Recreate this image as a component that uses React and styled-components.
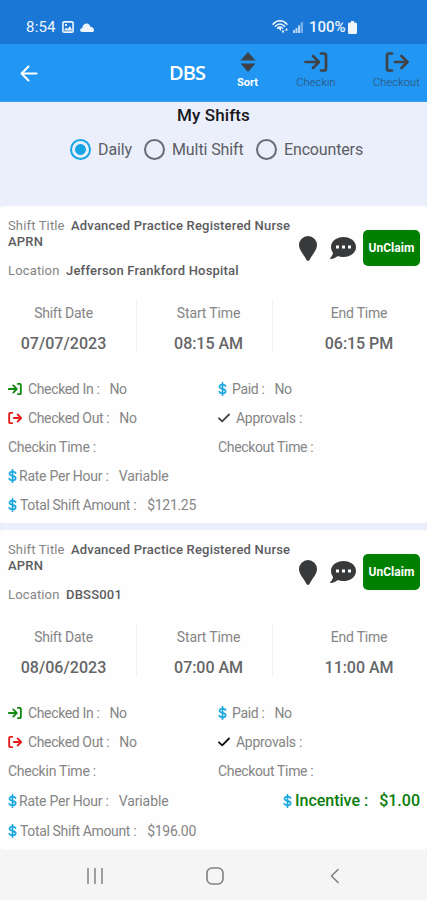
import React from "react";
import styled, { createGlobalStyle } from "styled-components";

const GlobalStyle = createGlobalStyle`
  * { box-sizing: border-box; }
  body { margin: 0; background: #fff; font-family: Roboto, "Liberation Sans", sans-serif; }
`;

const Screen = styled.div`
  width: 427px;
  height: 900px;
  display: flex;
  flex-direction: column;
  overflow: hidden;
  background: #ebeffb;
`;

const StatusBar = styled.header`
  height: 44px;
  flex: none;
  display: flex;
  align-items: center;
  padding: 10px 69px 0 26px;
  background: #1a77d6;
  color: #eef5fd;
  font-size: 15px;
`;

const Clock = styled.span`
  width: 36px;
  letter-spacing: 0.2px;
`;

const Battery = styled.span`
  margin-left: 5px;
  width: 38px;
  font-weight: 500;
  letter-spacing: 0;
`;

const Glyph = styled.svg`
  display: block;
  flex: none;
  width: ${(p) => p.$w}px;
  height: ${(p) => p.$h}px;
  margin-left: ${(p) => p.$left || 0}px;
  color: ${(p) => p.$color || "inherit"};
`;

const AppBar = styled.nav`
  height: 58px;
  flex: none;
  display: grid;
  grid-template-columns: 147px 80px 41px 96px 65px;
  background: #2196f3;
  border-bottom: 1px solid #3aa0f4;
`;

const Back = styled.div`
  padding: 21px 0 0 20px;
  color: #fff;
`;

const Brand = styled.div`
  padding-top: 17px;
  text-align: center;
  font: 600 20px/24px "Open Sans", sans-serif;
  letter-spacing: -1px;
  color: #fff;
`;

const Action = styled.div`
  display: flex;
  flex-direction: column;
  align-items: center;
  padding-top: 8px;
  color: #3f4347;
`;

const ActionLabel = styled.span`
  margin-top: 4px;
  font-size: 11px;
  line-height: 13px;
  font-weight: ${(p) => (p.$active ? 700 : 300)};
  letter-spacing: ${(p) => (p.$active ? 0 : 0.15)}px;
  color: ${(p) => (p.$active ? "#fff" : "#2f4a63")};
`;

const Filters = styled.section`
  height: 104px;
  flex: none;
`;

const Heading = styled.h1`
  margin: 0;
  padding-top: 3px;
  font-size: 17px;
  line-height: 20px;
  font-weight: 500;
  letter-spacing: 0.1px;
  text-align: center;
  color: #17181c;
`;

const Radios = styled.div`
  display: flex;
  align-items: center;
  height: 22px;
  margin-top: 13px;
  padding-left: 70px;
`;

const Option = styled.label`
  display: flex;
  align-items: center;
  width: ${(p) => p.$w}px;
  font-size: 16px;
  letter-spacing: ${(p) => p.$ls}px;
  color: #5b5d64;
  white-space: nowrap;
`;

const Ring = styled.span`
  width: 21px;
  height: 21px;
  flex: none;
  margin-right: 7px;
  border-radius: 50%;
  border: 2px solid ${(p) => (p.$on ? "#17a5e6" : "#6a6c75")};
  background: ${(p) => (p.$on ? "radial-gradient(circle, #17a5e6 5px, transparent 5.8px)" : "transparent")};
`;

const Card = styled.article`
  height: ${(p) => p.$h}px;
  flex: none;
  margin-bottom: ${(p) => p.$gap}px;
  background: #fefefe;
  border-radius: 3px;
  font-size: 14px;
  color: #858585;
`;

const Top = styled.div`
  display: flex;
  height: 84px;
  padding: 12px 7px 0 8px;
`;

const Summary = styled.div`
  width: 291px;
  flex: none;
  font-size: 13px;
  line-height: 16px;
`;

const Line = styled.div`
  white-space: nowrap;
  margin-top: ${(p) => p.$gap || 0}px;
`;

const Caption = styled.span`
  display: inline-block;
  width: ${(p) => p.$w}px;
  letter-spacing: 0.15px;
`;

const Strong = styled.span`
  font-weight: 500;
  letter-spacing: 0.2px;
  color: #5c5c5e;
`;

const Tools = styled.div`
  display: flex;
  align-items: center;
  height: 36px;
  margin-top: 12px;
`;

const Claim = styled.button`
  width: 57px;
  height: 36px;
  margin-left: 7px;
  padding: 0;
  border: 0;
  border-radius: 5px;
  background: #008000;
  color: #fff;
  font: 700 12px/36px Roboto, sans-serif;
  letter-spacing: 0.05px;
`;

const Times = styled.div`
  display: grid;
  grid-template-columns: 137px 136px 154px;
  height: 72px;
  padding-top: 10px;
`;

const TimeCell = styled.div`
  display: flex;
  flex-direction: column;
  align-items: center;
  height: 52px;
  padding: 4px ${(p) => p.$right || 0}px 0 ${(p) => p.$left || 0}px;
  border-right: ${(p) => (p.$last ? "0" : "1px solid #f1f3fa")};
  line-height: 18px;
`;

const TimeLabel = styled.span`
  letter-spacing: ${(p) => p.$ls || 0}px;
`;

const TimeValue = styled.span`
  margin-top: 13px;
  font-size: 16px;
  font-weight: 500;
  letter-spacing: ${(p) => p.$ls}px;
  color: #666668;
`;

const Details = styled.div`
  padding: 12px 7px 0 8px;
`;

const DetailRow = styled.div`
  display: grid;
  grid-template-columns: 210px 1fr;
  height: ${(p) => p.$h}px;
`;

const Detail = styled.div`
  display: flex;
  align-items: center;
  height: 29px;
  justify-content: ${(p) => (p.$end ? "flex-end" : "flex-start")};
  white-space: nowrap;
`;

const Field = styled.span`
  margin-left: ${(p) => p.$left || 0}px;
  letter-spacing: ${(p) => p.$ls || 0}px;
`;

const Incentive = styled.span`
  margin-left: 3px;
  font-size: 16px;
  font-weight: 500;
  color: #0a7d0a;
  white-space: pre;
`;

const SystemNav = styled.footer`
  height: 50px;
  flex: none;
  display: grid;
  grid-template-columns: 95px 120px 120px;
  align-items: center;
  padding: 2px 0 0 35px;
  justify-items: center;
  background: #f5f5f5;
  color: #808183;
`;

const stroke = { fill: "none", stroke: "currentColor", strokeLinecap: "round", strokeLinejoin: "round" };

const EnterIcon = (p) => (
  <Glyph {...p} viewBox="0 0 24 20" preserveAspectRatio="none">
    <path {...stroke} strokeWidth={p.$sw || 2.7} d="M1.500 10H14M9 4l6 6-6 6M17 1.500h3a2 2 0 0 1 2 2v13a2 2 0 0 1-2 2h-3" />
  </Glyph>
);

const ExitIcon = (p) => (
  <Glyph {...p} viewBox="0 0 24 20" preserveAspectRatio="none">
    <path {...stroke} strokeWidth={p.$sw || 2.7} d="M7 1.500H4a2 2 0 0 0-2 2v13a2 2 0 0 0 2 2h3M10 10h12M16.500 4l6 6-6 6" />
  </Glyph>
);

const Dollar = () => (
  <Glyph $w={9} $h={14} $color="#1ba7df" viewBox="0 0 9 14">
    <path {...stroke} strokeWidth="1.700" d="M4.500.8v12.400M7.600 4C7 2.900 6 2.600 4.500 2.600 2.700 2.600 1.500 3.400 1.500 4.700c0 3 6.200 1.500 6.200 4.500 0 1.400-1.300 2.200-3.200 2.200-1.600 0-2.800-.6-3.300-1.700" />
  </Glyph>
);

const Check = ({ color }) => (
  <Glyph $w={12} $h={10} $color={color} viewBox="0 0 12 10">
    <path {...stroke} strokeWidth="1.800" d="M1 5.300 4.200 8.300 11 1.500" />
  </Glyph>
);

const Pin = () => (
  <Glyph $w={18} $h={25} $color="#37393b" viewBox="0 0 18 25">
    <path fill="currentColor" d="M9 0a9 9 0 0 1 9 9c0 5-4 8.400-7.600 15.100q-1.400 1.700-2.800 0C4 17.400 0 14 0 9a9 9 0 0 1 9-9z" />
  </Glyph>
);

const Bubble = () => (
  <Glyph $w={26} $h={22} $left={13} $color="#37393b" viewBox="0 0 26 22">
    <path fill="currentColor" d="M13.500 0C20.400 0 26 4.300 26 9.900s-5.600 10.100-12.500 10.100c-2 0-4-.4-5.600-1C6 20.600 3.600 21.800.5 22q-.8-.2-.2-.9C1.700 19.500 2.800 17.800 3 15.900A8.700 8.700 0 0 1 1 9.900C1 4.300 6.600 0 13.500 0z" />
    <path fill="#fff" d="M6 8.500h3v3H6zM12 8.500h3v3h-3zM18 8.500h3v3h-3z" />
  </Glyph>
);

const shifts = [
  { location: "Jefferson Frankford Hospital", date: "07/07/2023", start: "08:15 AM", end: "06:15 PM", total: "$121.25", height: 317, gap: 7, check: "#444", last: 29 },
  { location: "DBSS001", date: "08/06/2023", start: "07:00 AM", end: "11:00 AM", total: "$196.00", height: 320, gap: 0, check: "#111", last: 30, incentive: "$1.00" },
];

function ShiftCard({ s }) {
  return (
    <Card $h={s.height} $gap={s.gap}>
      <Top>
        <Summary>
          <Line><Caption $w={63}>Shift Title</Caption><Strong>Advanced Practice Registered Nurse</Strong></Line>
          <Line><Strong>APRN</Strong></Line>
          <Line $gap={13}><Caption $w={58}>Location</Caption><Strong>{s.location}</Strong></Line>
        </Summary>
        <Tools><Pin /><Bubble /><Claim>UnClaim</Claim></Tools>
      </Top>
      <Times>
        <TimeCell $right={9}><TimeLabel $ls={-0.25}>Shift Date</TimeLabel><TimeValue $ls={0.05}>{s.date}</TimeValue></TimeCell>
        <TimeCell $left={8}><TimeLabel $ls={-0.15}>Start Time</TimeLabel><TimeValue $ls={-0.05}>{s.start}</TimeValue></TimeCell>
        <TimeCell $left={18} $last><TimeLabel $ls={-0.2}>End Time</TimeLabel><TimeValue $ls={-0.05}>{s.end}</TimeValue></TimeCell>
      </Times>
      <Details>
        <DetailRow $h={29}>
          <Detail><EnterIcon $w={14} $h={12} $sw={3.2} $color="#138a13" /><Field $left={6} $ls={-0.36}>Checked In :</Field><Field $left={10} $ls={-0.3}>No</Field></Detail>
          <Detail><Dollar /><Field $left={5} $ls={-0.35}>Paid :</Field><Field $left={10} $ls={-0.3}>No</Field></Detail>
        </DetailRow>
        <DetailRow $h={29}>
          <Detail><ExitIcon $w={14} $h={12} $sw={3.2} $color="#e51c1c" /><Field $left={6} $ls={-0.37}>Checked Out :</Field><Field $left={10} $ls={-0.3}>No</Field></Detail>
          <Detail><Check color={s.check} /><Field $left={6} $ls={-0.28}>Approvals :</Field></Detail>
        </DetailRow>
        <DetailRow $h={s.last}>
          <Detail><Field $ls={-0.24}>Checkin Time :</Field></Detail>
          <Detail><Field $ls={-0.34}>Checkout Time :</Field></Detail>
        </DetailRow>
        <DetailRow $h={s.last}>
          <Detail><Dollar /><Field $left={2} $ls={-0.25}>Rate Per Hour :</Field><Field $left={10} $ls={-0.1}>Variable</Field></Detail>
          {s.incentive && <Detail $end><Dollar /><Incentive>Incentive :</Incentive><Incentive>{"  " + s.incentive}</Incentive></Detail>}
        </DetailRow>
        <DetailRow $h={s.last}>
          <Detail><Dollar /><Field $left={3} $ls={-0.36}>Total Shift Amount :</Field><Field $left={11} $ls={-0.3}>{s.total}</Field></Detail>
        </DetailRow>
      </Details>
    </Card>
  );
}

export default function App() {
  return (
    <Screen>
      <GlobalStyle />
      <StatusBar>
        <Clock>8:54</Clock>
        <Glyph $w={12} $h={12} viewBox="0 0 12 12">
          <rect x=".9" y=".9" width="10.200" height="10.200" rx="1.200" {...stroke} strokeWidth="1.600" />
          <path fill="currentColor" d="m2 9.500 2-3 1.500 1.600L8 5l2.200 4.500zM3 3h2v2H3z" />
        </Glyph>
        <Glyph $w={14} $h={9} $left={6} viewBox="0 0 14 9">
          <path fill="currentColor" d="M2.500 9Q0 9 0 7.200T2.300 5C2.600 2 4.500.5 6.500.5S10 2 10.300 3.800C12.500 4 14 5.300 14 7.200 14 8.500 13 9 12 9z" />
        </Glyph>
        <Glyph $w={17} $h={14} $left={178} viewBox="0 0 17 14">
          <path {...stroke} strokeWidth="1.500" d="M1 4.300C5-.3 11-.3 15 4.300M3.300 6.300c3-3 6.400-3 9.400 0M5.500 8.200c1.500-1.500 3.500-1.500 5 0" />
          <path fill="currentColor" d="M6 8h3v3zM9.500 10.500h3l-1.500 3zM13 10.500 14.500 8l1.500 2.500z" />
        </Glyph>
        <Glyph $w={12} $h={12} $left={3} viewBox="0 0 12 12">
          <path fill="currentColor" opacity=".45" d="M8.500 2 11 .5V12H8.500z" />
          <path fill="currentColor" opacity=".75" d="M1 9h2v3H1zM3.500 7h2v5h-2zM6 4.500h2V12H6z" />
        </Glyph>
        <Battery>100%</Battery>
        <Glyph $w={9} $h={13} $left={1} viewBox="0 0 9 13">
          <path fill="currentColor" d="M3 0h3v1.500h1.500Q9 1.500 9 3v8.500Q9 13 7.500 13h-6Q0 13 0 11.500V3q0-1.500 1.500-1.500H3z" />
        </Glyph>
      </StatusBar>
      <AppBar>
        <Back>
          <Glyph $w={18} $h={17} viewBox="0 0 18 17">
            <path {...stroke} strokeWidth="2" d="M16.500 8.500H1.500M8.500 1.500l-7 7 7 7" />
          </Glyph>
        </Back>
        <Brand>DBS</Brand>
        <Action>
          <Glyph $w={16} $h={20} viewBox="0 0 16 20">
            <path fill="currentColor" d="M8 0l7.500 8.500H.5zM8 20 .5 11.500h15z" />
          </Glyph>
          <ActionLabel $active>Sort</ActionLabel>
        </Action>
        <Action><EnterIcon $w={24} $h={20} /><ActionLabel>Checkin</ActionLabel></Action>
        <Action><ExitIcon $w={24} $h={20} /><ActionLabel>Checkout</ActionLabel></Action>
      </AppBar>
      <Filters>
        <Heading>My Shifts</Heading>
        <Radios>
          <Option $w={74} $ls={-0.1}><Ring $on />Daily</Option>
          <Option $w={112} $ls={-0.1}><Ring />Multi Shift</Option>
          <Option $w={110} $ls={-0.15}><Ring />Encounters</Option>
        </Radios>
      </Filters>
      {shifts.map((s) => <ShiftCard key={s.date} s={s} />)}
      <SystemNav>
        <Glyph $w={16} $h={16} $left={24} viewBox="0 0 16 16"><path {...stroke} strokeWidth="1.500" strokeLinecap="butt" d="M1 0v16M8 0v16M15 0v16" /></Glyph>
        <Glyph $w={18} $h={18} $left={49} viewBox="0 0 18 18"><rect x="1" y="1" width="16" height="16" rx="5" {...stroke} strokeWidth="1.600" /></Glyph>
        <Glyph $w={9} $h={16} $left={48} viewBox="0 0 9 16"><path {...stroke} strokeWidth="1.600" d="M8 1.500 1.500 8 8 14.500" /></Glyph>
      </SystemNav>
    </Screen>
  );
}
